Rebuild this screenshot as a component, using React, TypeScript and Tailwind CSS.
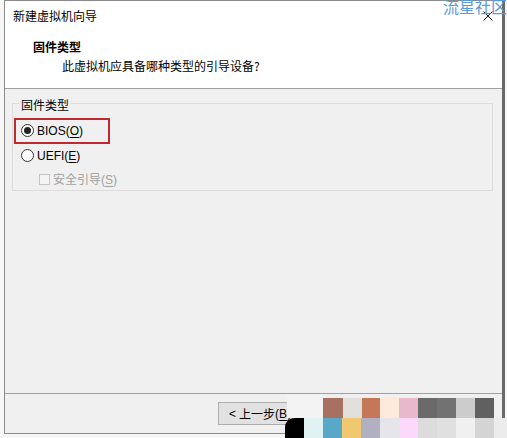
import React from "react";

const row1 = [
  "w-[20px] bg-[#a87060]",
  "w-[19px] bg-[#e2e0da]",
  "w-[18px] bg-[#c47858]",
  "w-[19px] bg-[#fdeadd]",
  "w-[19px] bg-[#e8b8cc]",
  "w-[19px] bg-[#6a6a6a]",
  "w-[19px] bg-[#727272]",
  "w-[19px] bg-[#cccccc]",
  "w-[19px] bg-[#606060]",
];

const row2 = [
  "w-[19px] bg-[#e0f2f2]",
  "w-[19px] bg-[#5aa8c8]",
  "w-[19px] bg-[#f0c870]",
  "w-[19px] bg-[#b0b0c0]",
  "w-[19px] bg-[#e6e6ea]",
  "w-[19px] bg-[#fcd8fc]",
  "w-[19px] bg-[#dcdcdc]",
  "w-[19px] bg-[#e0e0e0]",
  "w-[19px] bg-[#f0f0f0]",
  "w-[19px] bg-[#d4d4d4]",
  "w-[13px] bg-[#ececec]",
];

function Radio({ checked }: { checked?: boolean }) {
  return (
    <span className="w-[13px] h-[13px] rounded-full border border-[#333333] bg-white flex items-center justify-center shrink-0">
      {checked && <span className="w-[7px] h-[7px] rounded-full bg-[#222222]" />}
    </span>
  );
}

export default function App() {
  return (
    <div className="relative w-[507px] h-[438px] overflow-hidden bg-[#f6f6f6] font-['Liberation_Sans','Noto_Sans_CJK_SC',sans-serif] text-[12px] text-black">
      <div className="pl-[4px] flex">
        <div className="w-[501px] h-[434px] flex flex-col border-l border-t border-b border-[#8a8a8a] border-r-[3px] border-r-[#6a6a6a]">
          {/* header */}
          <div className="h-[88px] bg-white border-b border-[#a0a0a0] shrink-0">
            <div className="pt-[7px] pl-[8px] pr-[9px] flex items-center justify-between">
              <span className="leading-[16px] font-['Noto_Sans_CJK_SC',sans-serif]">新建虚拟机向导</span>
              <svg width="10" height="10" viewBox="0 0 10 10" className="block">
                <path d="M0.5 0.5 L9.5 9.5 M9.5 0.5 L0.5 9.5" stroke="#111" strokeWidth="1" fill="none" />
              </svg>
            </div>
            <div className="mt-[15px] pl-[28px] leading-[16px] font-bold font-['Noto_Sans_CJK_SC',sans-serif]">固件类型</div>
            <div className="mt-[3px] pl-[57px] leading-[16px] font-['Noto_Sans_CJK_SC',sans-serif]">此虚拟机应具备哪种类型的引导设备?</div>
          </div>
          {/* body */}
          <div className="flex-1 bg-[#f0f0f0]">
            <div className="relative mt-[14px] ml-[7px] w-[481px] h-[88px] border border-[#dcdcdc]">
              <span className="absolute left-[7px] top-[-7px] px-[1px] bg-[#f0f0f0] leading-[16px] font-['Noto_Sans_CJK_SC',sans-serif]">固件类型</span>
              <div className="pt-[14px] flex flex-col">
                <div className="h-[25px] pl-[8px] flex items-center gap-[3px]">
                  <Radio checked />
                  <span className="leading-[16px]">BIOS(<span className="underline underline-offset-2">O</span>)</span>
                </div>
                <div className="h-[25px] pl-[8px] flex items-center gap-[3px]">
                  <Radio />
                  <span className="leading-[16px]">UEFI(<span className="underline underline-offset-2">E</span>)</span>
                </div>
                <div className="h-[23px] pl-[26px] flex items-center gap-[3px] text-[#a0a0a0]">
                  <span className="w-[11px] h-[11px] border border-[#c4c4c4] bg-[#f4f4f4] shrink-0" />
                  <span className="leading-[16px]">
                    <span className="font-['Noto_Sans_CJK_SC',sans-serif]">安全引导</span>(<span className="underline underline-offset-2">S</span>)
                  </span>
                </div>
              </div>
            </div>
          </div>
          {/* footer */}
          <div className="h-[40px] shrink-0 border-t border-[#a0a0a0] bg-[#f0f0f0]">
            <div className="mt-[8px] ml-[213px] w-[75px] h-[23px] border border-[#adadad] bg-[#e1e1e1] flex items-center pl-[10px] leading-[16px] whitespace-nowrap overflow-hidden">
              &lt; <span className="ml-[3px] font-['Noto_Sans_CJK_SC',sans-serif]">上一步</span>(<span className="underline underline-offset-2">B</span>)
            </div>
          </div>
        </div>
      </div>

      {/* red annotation box */}
      <div className="absolute left-[14px] top-[118px] w-[96px] h-[26px] border-2 border-[#be2a2f]" />

      {/* watermark */}
      <div className="absolute left-[443px] top-[-4px] leading-[20px] text-[16px] text-[#5a9ad8] whitespace-nowrap font-['Noto_Sans_CJK_SC',sans-serif]">
        流星社区
      </div>

      {/* colour palette overlay */}
      <div className="absolute left-[287px] top-[396px] w-[36px] h-[22px] bg-[#f3f3f3]" />
      <div className="absolute left-[323px] top-[398px] h-[20px] flex">
        {row1.map((c, i) => (
          <div key={i} className={`h-[20px] ${c}`} />
        ))}
      </div>
      <div className="absolute left-[285px] top-[418px] h-[20px] flex">
        <div className="w-[19px] h-[20px] bg-black rounded-tl-[9px]" />
        {row2.map((c, i) => (
          <div key={i} className={`h-[20px] ${c}`} />
        ))}
      </div>
    </div>
  );
}
